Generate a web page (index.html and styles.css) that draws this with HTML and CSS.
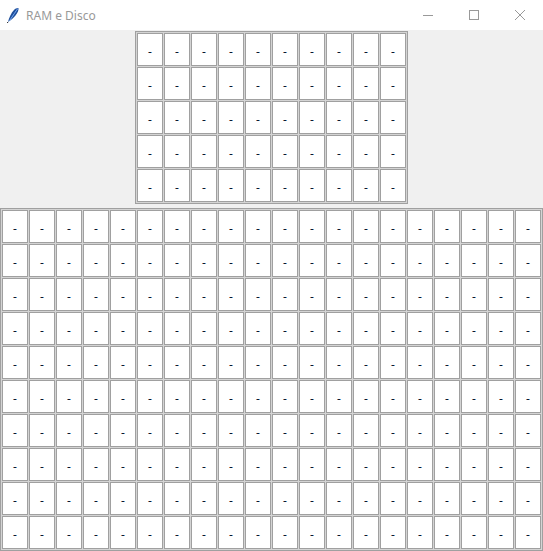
FILE: index.html
```html
<!DOCTYPE html>
<html>
<head>
<meta charset="utf-8">
<link rel="stylesheet" href="styles.css">
</head>
<body>
<div class="titlebar">
  <svg class="app-icon" width="16" height="16" viewBox="0 0 16 16">
    <path d="M3 15 C4 11 6 6 9 3 C10.5 1.5 12.5 0.8 13.5 1.2 C13.8 3 12.5 6 10.5 8.5 C8.5 11 6 13 3 15 Z" fill="#1f4f9a"/>
    <path d="M12.8 1.6 C11 4 8 8.5 4.5 13.8" stroke="#7fb2ff" stroke-width="0.9" fill="none"/>
    <path d="M3 15 L2.2 16" stroke="#222" stroke-width="1"/>
  </svg>
  <span class="title">RAM e Disco</span>
  <div class="controls">
    <div class="ctl"><svg width="10" height="10" viewBox="0 0 10 10"><path d="M0 5.5 H10" stroke="#999" stroke-width="1"/></svg></div>
    <div class="ctl"><svg width="10" height="10" viewBox="0 0 10 10"><rect x="0.5" y="0.5" width="9" height="9" fill="none" stroke="#999" stroke-width="1"/></svg></div>
    <div class="ctl"><svg width="10" height="10" viewBox="0 0 10 10"><path d="M0 0 L10 10 M10 0 L0 10" stroke="#999" stroke-width="1"/></svg></div>
  </div>
</div>
<div class="client">
  <div class="grid grid-ram" id="ram"></div>
  <div class="grid grid-disk" id="disk"></div>
</div>
<script src="script.js"></script>
</body>
</html>
```
FILE: styles.css
```css
html, body {
  margin: 0;
  padding: 0;
  background: #f0f0f0;
  overflow: hidden;
}
body {
  width: 543px;
  height: 551px;
  font-family: "Noto Sans", "Liberation Sans", sans-serif;
}
.titlebar {
  height: 30px;
  background: #ffffff;
  display: flex;
  align-items: center;
}
.app-icon {
  margin-left: 5px;
  margin-right: 5px;
}
.title {
  font-size: 12px;
  color: #999999;
  padding-top: 1px;
}
.controls {
  margin-left: auto;
  display: flex;
  height: 30px;
}
.ctl {
  width: 46px;
  height: 30px;
  display: flex;
  align-items: center;
  justify-content: center;
}
.client {
  display: flex;
  flex-direction: column;
  align-items: center;
  padding-top: 1px;
}
.grid {
  display: grid;
  gap: 1px;
  padding: 1px;
  border: 1px solid #a0a0a0;
  background: #d4d4d4;
}
.grid-ram {
  grid-template-columns: repeat(10, 26px);
  grid-auto-rows: 33px;
}
.grid-disk {
  margin-top: 4px;
  grid-template-columns: repeat(20, 26px);
  grid-auto-rows: 33px;
}
.cell {
  box-sizing: border-box;
  border: 1px solid #a0a0a0;
  background: #ffffff;
  display: flex;
  align-items: center;
  justify-content: center;
  font-size: 12px;
  color: #0a1a33;
  padding-top: 4px;
}
```
FILE: script.js
```js
function fill(id, n) {
  var el = document.getElementById(id);
  for (var i = 0; i < n; i++) {
    var c = document.createElement('div');
    c.className = 'cell';
    c.textContent = '-';
    el.appendChild(c);
  }
}
fill('ram', 50);
fill('disk', 200);
```
